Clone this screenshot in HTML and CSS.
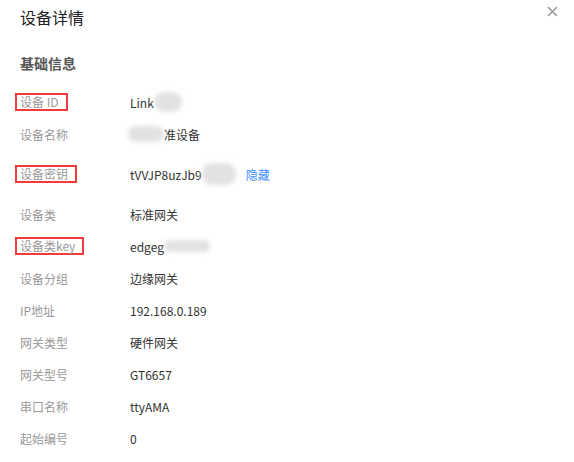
FILE: index.html
```html
<!DOCTYPE html>
<html lang="zh-CN">
<head>
    <meta charset="UTF-8">
    <meta name="viewport" content="width=device-width, initial-scale=1.0">
    <title>设备详情</title>
    <link rel="stylesheet" href="styles.css">
</head>
<body>

    <div class="drawer">
        <div class="drawer-header">
            <div class="drawer-title">设备详情</div>
            <span class="close">
                <svg width="11" height="11" viewBox="0 0 11 11">
                    <path d="M1 1 L10 10 M10 1 L1 10" stroke="#999" stroke-width="1.6" fill="none"/>
                </svg>
            </span>
        </div>

        <div class="section-title">基础信息</div>

        <div class="info-list">
            <div class="row">
                <div class="label"><span class="mark mark-id">设备 ID</span></div>
                <div class="value">Link<span class="blur blur-id"></span></div>
            </div>
            <div class="row">
                <div class="label">设备名称</div>
                <div class="value"><span class="blur blur-name"></span>准设备</div>
            </div>
            <div class="row row-tall">
                <div class="label"><span class="mark">设备密钥</span></div>
                <div class="value">tVVJP8uzJb9<span class="blur blur-secret"></span><a class="link" href="#">隐藏</a></div>
            </div>
            <div class="row">
                <div class="label">设备类</div>
                <div class="value">标准网关</div>
            </div>
            <div class="row">
                <div class="label"><span class="mark">设备类key</span></div>
                <div class="value">edgeg<span class="blur blur-key"></span></div>
            </div>
            <div class="row">
                <div class="label">设备分组</div>
                <div class="value">边缘网关</div>
            </div>
            <div class="row">
                <div class="label">IP地址</div>
                <div class="value">192.168.0.189</div>
            </div>
            <div class="row">
                <div class="label">网关类型</div>
                <div class="value">硬件网关</div>
            </div>
            <div class="row">
                <div class="label">网关型号</div>
                <div class="value">GT6657</div>
            </div>
            <div class="row">
                <div class="label">串口名称</div>
                <div class="value">ttyAMA</div>
            </div>
            <div class="row">
                <div class="label">起始编号</div>
                <div class="value">0</div>
            </div>
        </div>
    </div>

</body>
</html>
```

FILE: styles.css
```css
body {
    margin: 0;
    font-family: "Noto Sans CJK SC", "Noto Sans", sans-serif;
    background: #fff;
    color: #333;
}

.drawer {
    width: 574px;
    height: 462px;
    overflow: hidden;
}

.drawer-header {
    display: flex;
    justify-content: space-between;
    align-items: flex-start;
    padding: 5px 16px 0 20px;
}

.drawer-title {
    font-size: 16px;
    line-height: 24px;
    color: #222;
}

.close {
    margin-top: 1px;
    width: 11px;
    height: 11px;
    cursor: pointer;
}

.close svg {
    display: block;
}

.section-title {
    margin: 23px 20px 12px;
    font-size: 14px;
    line-height: 22px;
    font-weight: bold;
    color: #555;
}

.info-list {
    padding: 0 20px;
}

.row {
    display: grid;
    grid-template-columns: 110px 1fr;
    align-items: center;
    height: 32px;
    font-size: 12px;
}

.row-tall {
    height: 48px;
}

.label {
    color: #999;
}

.value {
    display: flex;
    align-items: center;
    color: #333;
}

.mark {
    display: inline-block;
    margin-left: -5px;
    padding: 0 7px 0 3px;
    line-height: 14px;
    border: 2px solid #f23b3b;
}

.mark-id {
    padding-right: 8px;
}

.link {
    color: #3f8cff;
    text-decoration: none;
    margin-left: 10px;
}

.blur {
    display: inline-block;
    background: #e2e2e2;
    border-radius: 10px;
    filter: blur(2px);
}

.blur-id {
    width: 28px;
    height: 20px;
}

.blur-name {
    width: 36px;
    height: 16px;
    margin-left: -2px;
}

.blur-secret {
    width: 34px;
    height: 22px;
}

.blur-key {
    width: 46px;
    height: 12px;
}
```
